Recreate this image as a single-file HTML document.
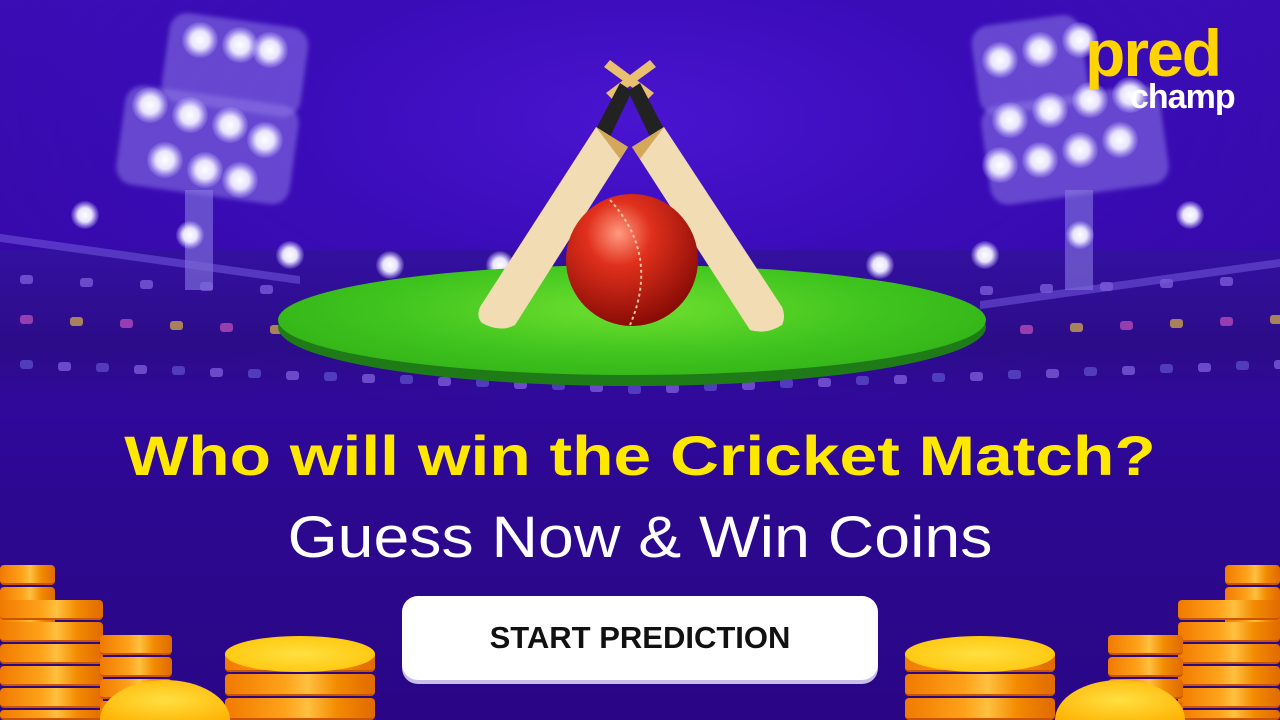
<!DOCTYPE html>
<html><head><meta charset="utf-8"><style>
*{margin:0;padding:0;box-sizing:border-box}
html{width:1280px;height:720px;overflow:hidden}
body{width:1280px;height:720px;overflow:hidden;position:relative;font-family:"Liberation Sans",sans-serif;
background:radial-gradient(ellipse 700px 300px at 640px 120px,#4a14d0 0%,#3a0cb8 50%,rgba(0,0,0,0) 100%),linear-gradient(#3a0db4 0%,#3509a8 40%,#2c0890 70%,#2a0686 100%)}
.abs{position:absolute}
.light{position:absolute;border-radius:50%;background:radial-gradient(circle,#fff 0%,#e8e4ff 35%,rgba(200,190,255,0.4) 60%,rgba(120,90,255,0) 75%)}
.panel{position:absolute;border-radius:18px;background:rgba(140,120,230,0.55);filter:blur(2px)}
.seat{position:absolute;width:13px;height:9px;border-radius:3px;background:#6a4bc8}
.stand{position:absolute;left:0;width:1280px}
.coin{position:absolute;border-radius:4px;background:linear-gradient(90deg,#f07a00 0%,#ffa21a 40%,#ffc040 55%,#f38a00 75%,#e06a00 100%);border-bottom:2px solid #c85600}
</style></head><body>
<div class="stand" style="top:250px;height:160px;background:linear-gradient(#3410a0,#2c0c88 60%,rgba(44,10,136,0))"></div>
<div class="abs" style="left:0;top:255px;width:300px;height:8px;background:#6e52d8;transform:skewY(8deg);opacity:.6"></div>
<div class="abs" style="left:980px;top:280px;width:300px;height:8px;background:#6e52d8;transform:skewY(-8deg);opacity:.6"></div>
<div id="seats"></div>
<div class="abs" style="left:185px;top:190px;width:28px;height:100px;background:#7a6ad8;opacity:.7"></div>
<div class="abs" style="left:1065px;top:190px;width:28px;height:100px;background:#7a6ad8;opacity:.7"></div>
<div class="panel" style="left:165px;top:20px;width:140px;height:90px;transform:rotate(8deg)"></div>
<div class="panel" style="left:120px;top:95px;width:175px;height:100px;transform:rotate(8deg)"></div>
<div class="panel" style="left:975px;top:20px;width:110px;height:90px;transform:rotate(-8deg)"></div>
<div class="panel" style="left:985px;top:95px;width:180px;height:100px;transform:rotate(-8deg)"></div>
<div id="lights"></div>
<div class="abs" style="left:278px;top:268px;width:708px;height:118px;border-radius:50%;background:#1f7a18"></div>
<div class="abs" style="left:278px;top:265px;width:708px;height:110px;border-radius:50%;background:radial-gradient(ellipse at 50% 40%,#6fe030 0%,#3fc41e 50%,#2aa814 100%)"></div>
<svg class="abs" style="left:470px;top:55px" width="330" height="280" viewBox="0 0 330 280">
<path d="M140 5 L184 38 L178 44 L134 12Z" fill="#e8c070"/>
<path d="M180 5 L136 38 L142 44 L186 12Z" fill="#e8c070"/>
<path d="M150 28 L162 36 L140 82 L126 74Z" fill="#222"/>
<path d="M170 28 L158 36 L180 82 L194 74Z" fill="#222"/>
<path d="M126 72 L158 92 L45 270 Q30 278 12 268 Q6 262 10 252 Z" fill="#f2dcb4"/>
<path d="M126 72 L158 92 L150 104 Z" fill="#d4a85a"/>
<path d="M194 72 L162 92 L280 275 Q296 280 312 270 Q316 262 312 252 Z" fill="#f2dcb4"/>
<path d="M194 72 L162 92 L170 104 Z" fill="#d4a85a"/>
<defs><radialGradient id="b" cx="40%" cy="30%" r="70%"><stop offset="0" stop-color="#ff9a80"/><stop offset=".35" stop-color="#e0301c"/><stop offset="1" stop-color="#8a0c06"/></radialGradient></defs>
<circle cx="162" cy="205" r="66" fill="url(#b)"/>
<path d="M140 145 Q190 200 160 270" stroke="#f6c0a0" stroke-width="2" fill="none" stroke-dasharray="3 3"/>
</svg>
<div class="abs" style="left:1085px;top:20px;color:#ffd400;font:bold 66px/1 'Liberation Sans',sans-serif;letter-spacing:-2px">pred</div>
<div class="abs" style="left:1130px;top:80px;color:#fff;font:bold 34px/1 'Liberation Sans',sans-serif;letter-spacing:-1px">champ</div>
<div class="abs" style="left:0;top:422px;width:1280px;text-align:center;color:#ffe800;font:bold 56px/1.2 'Liberation Sans',sans-serif;transform:scaleX(1.21)">Who will win the Cricket Match?</div>
<div class="abs" style="left:0;top:503px;width:1280px;text-align:center;color:#fff;font:58px/1.2 'Liberation Sans',sans-serif;transform:scaleX(1.11)">Guess Now &amp; Win Coins</div>
<div class="abs" style="left:402px;top:596px;width:476px;height:84px;border-radius:16px;background:#fff;box-shadow:0 4px 0 #c9c0e8;text-align:center;font:bold 31px/84px 'Liberation Sans',sans-serif;color:#111">START PREDICTION</div>
<div id="coins"></div>
<script>
var s='',l='';
var rows=[[300,40],[340,30],[385,18]];
rows.forEach(function(r,i){for(var x=20;x<1280;x+=r[1]+20){if(x>290&&x<980&&r[0]<380)continue;var c=['#7a5ad8','#b04ab8','#5a48c8','#c8a050'][(x*7+i)%4];s+='<div class="seat" style="left:'+x+'px;top:'+(r[0]+((x<640?(640-x):(x-640))*-0.04))+'px;background:'+c+';opacity:.8"></div>';}});
document.getElementById('seats').innerHTML=s;
var L=[[200,40],[240,45],[270,50],[150,105],[190,115],[230,125],[265,140],[165,160],[205,170],[240,180],[1080,40],[1040,50],[1000,60],[1010,120],[1050,110],[1090,100],[1130,95],[1000,165],[1040,160],[1080,150],[1120,140],[85,215],[190,235],[290,255],[390,265],[500,265],[880,265],[985,255],[1080,235],[1190,215]];
L.forEach(function(p){var r=p[1]>200?14:18;l+='<div class="light" style="left:'+(p[0]-r)+'px;top:'+(p[1]-r)+'px;width:'+2*r+'px;height:'+2*r+'px"></div>';});
document.getElementById('lights').innerHTML=l;
var c='';
function stack(x,y,w,n,h){for(var i=0;i<n;i++){var t=y+i*h;if(t>718)break;c+='<div class="coin" style="left:'+x+'px;top:'+t+'px;width:'+w+'px;height:'+Math.min(h-2,720-t)+'px"></div>';}}
stack(0,565,55,3,22);stack(0,600,103,6,22);stack(100,635,72,4,22);
stack(225,650,150,3,24);stack(905,650,150,3,24);stack(1225,565,55,3,22);stack(1178,600,102,6,22);stack(1108,635,75,4,22);
document.getElementById('coins').innerHTML=c+'<div class="abs" style="left:225px;top:636px;width:150px;height:36px;border-radius:50%;background:radial-gradient(#ffe040,#ffc000)"></div><div class="abs" style="left:905px;top:636px;width:150px;height:36px;border-radius:50%;background:radial-gradient(#ffe040,#ffc000)"></div><div class="abs" style="left:100px;top:680px;width:130px;height:40px;border-radius:50% 50% 0 0/100% 100% 0 0;background:radial-gradient(#ffe040,#ffb000)"></div><div class="abs" style="left:1055px;top:680px;width:130px;height:40px;border-radius:50% 50% 0 0/100% 100% 0 0;background:radial-gradient(#ffe040,#ffb000)"></div>';
</script>
</body></html>
